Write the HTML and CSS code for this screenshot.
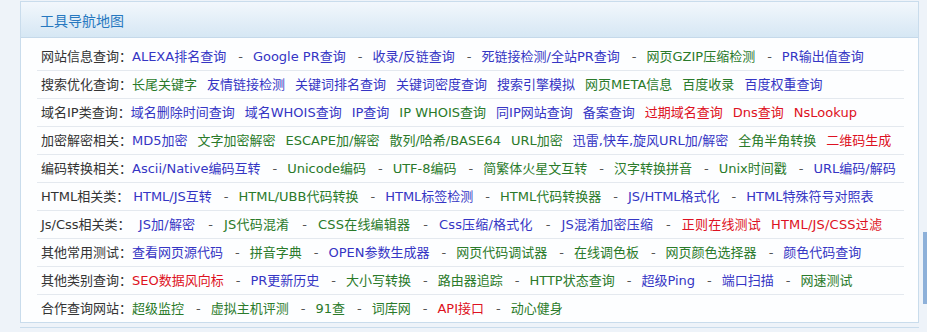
FILE: index.html
```html
<!DOCTYPE html>
<html lang="zh-CN">
<head>
<meta charset="utf-8">
<title>工具导航地图</title>
<link rel="stylesheet" href="styles.css">
</head>
<body>
<div class="panel">
  <div class="panel-head"><h2 class="title">工具导航地图</h2></div>
  <div class="panel-body">
    <div class="row"><span class="label">网站信息查询：</span><a class="b">ALEXA排名查询</a><span class="sep">-</span><a class="b">Google PR查询</a><span class="sep">-</span><a class="b">收录/反链查询</a><span class="sep">-</span><a class="b">死链接检测/全站PR查询</a><span class="sep">-</span><a class="g">网页GZIP压缩检测</a><span class="sep">-</span><a class="b">PR输出值查询</a></div>
    <div class="row"><span class="label">搜索优化查询：</span><a class="g">长尾关键字</a><a class="b">友情链接检测</a><a class="b">关键词排名查询</a><a class="b">关键词密度查询</a><a class="b">搜索引擎模拟</a><a class="g">网页META信息</a><a class="g">百度收录</a><a class="b">百度权重查询</a></div>
    <div class="row"><span class="label">域名IP类查询：</span><a class="b">域名删除时间查询</a><a class="b">域名WHOIS查询</a><a class="b">IP查询</a><a class="g">IP WHOIS查询</a><a class="b">同IP网站查询</a><a class="b">备案查询</a><a class="r">过期域名查询</a><a class="r">Dns查询</a><a class="r">NsLookup</a></div>
    <div class="row"><span class="label">加密解密相关：</span><a class="b">MD5加密</a><a class="g">文字加密解密</a><a class="g">ESCAPE加/解密</a><a class="g">散列/哈希/BASE64</a><a class="g">URL加密</a><a class="b">迅雷,快车,旋风URL加/解密</a><a class="g">全角半角转换</a><a class="r">二维码生成</a></div>
    <div class="row"><span class="label">编码转换相关：</span><a class="b">Ascii/Native编码互转</a><span class="sep">-</span><a class="g">Unicode编码</a><span class="sep">-</span><a class="g">UTF-8编码</a><span class="sep">-</span><a class="g">简繁体火星文互转</a><span class="sep">-</span><a class="g">汉字转换拼音</a><span class="sep">-</span><a class="g">Unix时间戳</a><span class="sep">-</span><a class="b">URL编码/解码</a></div>
    <div class="row"><span class="label sp">HTML相关类：</span><a class="b">HTML/JS互转</a><span class="sep">-</span><a class="g">HTML/UBB代码转换</a><span class="sep">-</span><a class="b">HTML标签检测</a><span class="sep">-</span><a class="g">HTML代码转换器</a><span class="sep">-</span><a class="b">JS/HTML格式化</a><span class="sep">-</span><a class="b">HTML特殊符号对照表</a></div>
    <div class="row wide"><span class="label sp2">Js/Css相关类：</span><a class="b">JS加/解密</a><span class="sep">-</span><a class="g">JS代码混淆</a><span class="sep">-</span><a class="g">CSS在线编辑器</a><span class="sep">-</span><a class="b">Css压缩/格式化</a><span class="sep">-</span><a class="b">JS混淆加密压缩</a><span class="sep">-</span><a class="r">正则在线测试</a><a class="r">HTML/JS/CSS过滤</a></div>
    <div class="row"><span class="label">其他常用测试：</span><a class="b">查看网页源代码</a><span class="sep">-</span><a class="g">拼音字典</a><span class="sep">-</span><a class="b">OPEN参数生成器</a><span class="sep">-</span><a class="g">网页代码调试器</a><span class="sep">-</span><a class="g">在线调色板</a><span class="sep">-</span><a class="g">网页颜色选择器</a><span class="sep">-</span><a class="b">颜色代码查询</a></div>
    <div class="row"><span class="label">其他类别查询：</span><a class="r">SEO数据风向标</a><span class="sep">-</span><a class="b">PR更新历史</a><span class="sep">-</span><a class="g">大小写转换</a><span class="sep">-</span><a class="g">路由器追踪</a><span class="sep">-</span><a class="g">HTTP状态查询</a><span class="sep">-</span><a class="b">超级Ping</a><span class="sep">-</span><a class="b">端口扫描</a><span class="sep">-</span><a class="g">网速测试</a></div>
    <div class="row last"><span class="label">合作查询网站：</span><a class="g">超级监控</a><span class="sep">-</span><a class="g">虚拟主机评测</a><span class="sep">-</span><a class="g">91查</a><span class="sep">-</span><a class="g">词库网</a><span class="sep">-</span><a class="r">API接口</a><span class="sep">-</span><a class="g">动心健身</a></div>
  </div>
</div>
<div class="next-panel"></div>
<div class="side-tab"></div>
</body>
</html>
```
FILE: styles.css
```css
html, body {
  margin: 0;
  padding: 0;
}
body {
  background: #eef3f9;
  font-family: "DejaVu Sans", "Noto Sans CJK SC", sans-serif;
  font-size: 13px;
  color: #333;
  position: relative;
  height: 332px;
  overflow: hidden;
}
.panel {
  margin: 1px 0 0 20px;
  width: 897px;
  border: 1px solid #c9dcec;
  background: #fdfeff;
}
.panel-head {
  height: 35px;
  background: linear-gradient(#f2f7fc, #d6e7f4);
  border-bottom: 1px solid #c5d9ea;
  display: flex;
  align-items: center;
  padding-left: 19px;
}
.title {
  margin: 0;
  font-family: "Noto Sans CJK SC", sans-serif;
  font-size: 14px;
  font-weight: normal;
  color: #2778c0;
}
.panel-body {
  padding: 5px 14px 0 16px;
}
.row {
  height: 27px;
  line-height: 27px;
  border-bottom: 1px solid #e4e9ef;
  padding-left: 4px;
  white-space: nowrap;
}
.row.last {
  border-bottom: none;
}
.label {
  color: #333;
}
.label.sp {
  margin-right: 4px;
}
.label.sp2 {
  margin-right: 8px;
}
.row a {
  margin-right: 10px;
  text-decoration: none;
}
.row.wide a {
  letter-spacing: 0.2px;
}
.b { color: #3535c4; }
.g { color: #2a7a2a; }
.r { color: #dd1122; }
.sep {
  color: #555;
  margin: 0 10px 0 2px;
}
.row.wide .sep {
  margin: 0 11px 0 3px;
}
.next-panel {
  margin: 4px 0 0 20px;
  width: 899px;
  border-top: 1px solid #c9dcec;
}
.side-tab {
  position: absolute;
  left: 923px;
  top: 232px;
  width: 4px;
  height: 72px;
  background: #8db0d9;
}
```
